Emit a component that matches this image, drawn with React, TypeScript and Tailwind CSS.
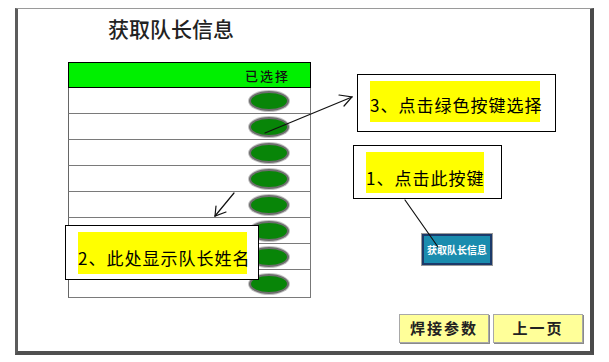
import React from "react";

const ROWS = 8;

const Oval: React.FC = () => (
  <div className="w-[40px] h-[20px] rounded-[50%] bg-[#088508] border-2 border-[#6e6e6e] shadow-[0_0_0_1px_#c4c4c4]" />
);

interface CalloutProps {
  text: string;
  className: string;
  yellowClass: string;
}

// white note box with a yellow marker strip, as drawn over the HMI screen
const Callout: React.FC<CalloutProps> = ({ text, className, yellowClass }) => (
  <div className={`absolute bg-white border border-black pl-[12px] pt-[6px] ${className}`}>
    <div className={`bg-[#ffff00] text-[17px] leading-[24px] tracking-[1px] text-black whitespace-nowrap ${yellowClass}`}>
      {text}
    </div>
  </div>
);

const App: React.FC = () => {
  return (
    <div className="relative w-[609px] h-[362px] bg-white overflow-hidden font-['Noto_Sans_CJK_SC','Liberation_Sans',sans-serif]">
      {/* screen frame */}
      <div className="ml-[15px] mt-[8px] w-[579px] h-[347px] flex flex-col border-t border-t-[#9a9a9a] border-l-[3px] border-l-[#5c5c5c] border-r-[4px] border-r-[#4a4a4a] border-b-[4px] border-b-[#505050]">
        <div className="ml-[90px] mt-[6px] text-[21px] leading-[26px] font-medium text-[#222]">
          获取队长信息
        </div>

        {/* captain table */}
        <div className="ml-[50px] mt-[21px] w-[243px] flex flex-col">
          <div className="h-[26px] bg-[#00f000] border border-black flex items-center justify-end pr-[20px]">
            <span className="text-[13px] leading-none tracking-[2px] font-medium text-[#111]">已选择</span>
          </div>
          {Array.from({ length: ROWS }).map((_, i) => (
            <div
              key={i}
              className={`${i === ROWS - 1 ? "h-[28px]" : "h-[26px]"} border-b border-x border-b-[#7a7a7a] border-l-[#666] border-r-[#777] bg-white flex items-center justify-end pr-[21px]`}
            >
              <Oval />
            </div>
          ))}
        </div>

        <div className="flex-1" />

        <div className="flex justify-end gap-[4px] pr-[7px] pb-[8px]">
          <button className="w-[90px] h-[29px] bg-[#ffff99] border border-[#a8a8a8] shadow-[1px_1px_0_#8a8a8a] text-[15px] font-bold tracking-[2px] text-[#222]">
            焊接参数
          </button>
          <button className="w-[90px] h-[29px] bg-[#ffff99] border border-[#a8a8a8] shadow-[1px_1px_0_#8a8a8a] text-[15px] font-bold tracking-[2px] text-[#222]">
            上一页
          </button>
        </div>
      </div>

      {/* get captain info button */}
      <button className="absolute left-[422px] top-[234px] w-[70px] h-[31px] bg-[#1a8cae] border-2 border-[#1c3a6a] shadow-[0_0_0_1px_#9a9a9a] text-white text-[10px] font-bold leading-none">
        获取队长信息
      </button>

      <Callout
        text="3、点击绿色按键选择"
        className="left-[357px] top-[74px] w-[199px] h-[58px]"
        yellowClass="w-[170px] h-[41px] pt-[12px]"
      />
      <Callout
        text="1、点击此按键"
        className="left-[353px] top-[145px] w-[149px] h-[54px]"
        yellowClass="w-[118px] h-[41px] pt-[14px]"
      />
      <Callout
        text="2、此处显示队长姓名"
        className="left-[65px] top-[225px] w-[194px] h-[55px]"
        yellowClass="w-[169px] h-[42px] pt-[14px]"
      />

      {/* pointer lines */}
      <svg className="absolute inset-0 pointer-events-none" width="609" height="362" viewBox="0 0 609 362">
        <g stroke="#111" strokeWidth="1.2" fill="none" strokeLinecap="round">
          <line x1="265" y1="133" x2="352" y2="97" />
          <polyline points="339,95 352,97 344,106" />
          <line x1="234" y1="193" x2="215" y2="216" />
          <polyline points="216,206 215,216 226,212" />
          <line x1="405" y1="200" x2="438" y2="247" />
        </g>
      </svg>
    </div>
  );
};

export default App;
